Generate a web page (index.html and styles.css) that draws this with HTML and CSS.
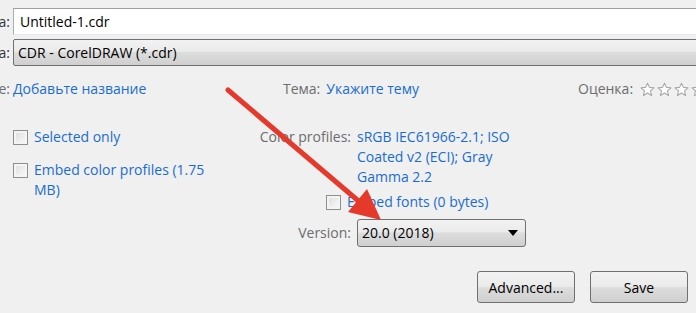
FILE: index.html
```html
<!DOCTYPE html>
<html lang="ru">
<head>
    <meta charset="UTF-8">
    <title>Save Drawing</title>
    <link rel="stylesheet" href="styles.css">
</head>
<body>
    <div class="dialog">
        <div class="fields">
            <label class="field-label">Имя файла:</label>
            <div class="textbox">Untitled-1.cdr</div>
            <label class="field-label">Тип файла:</label>
            <div class="combo">CDR - CorelDRAW (*.cdr)</div>
        </div>

        <div class="meta">
            <div class="meta-item first">
                <span class="meta-label">Название:</span>
                <a class="link">Добавьте название</a>
            </div>
            <div class="meta-item topic">
                <span class="muted">Тема:</span>
                <a class="link">Укажите тему</a>
            </div>
            <div class="meta-item">
                <span class="muted">Оценка:</span>
                <span class="stars">
                    <svg viewBox="0 0 14 14"><path d="M7 1.2 8.8 5 13 5.4 9.8 8.2 10.8 12.6 7 10.3 3.2 12.6 4.2 8.2 1 5.4 5.2 5Z"/></svg>
                    <svg viewBox="0 0 14 14"><path d="M7 1.2 8.8 5 13 5.4 9.8 8.2 10.8 12.6 7 10.3 3.2 12.6 4.2 8.2 1 5.4 5.2 5Z"/></svg>
                    <svg viewBox="0 0 14 14"><path d="M7 1.2 8.8 5 13 5.4 9.8 8.2 10.8 12.6 7 10.3 3.2 12.6 4.2 8.2 1 5.4 5.2 5Z"/></svg>
                    <svg viewBox="0 0 14 14"><path d="M7 1.2 8.8 5 13 5.4 9.8 8.2 10.8 12.6 7 10.3 3.2 12.6 4.2 8.2 1 5.4 5.2 5Z"/></svg>
                </span>
            </div>
        </div>

        <div class="options">
            <div class="options-left">
                <label class="check"><span class="box"></span><span>Selected only</span></label>
                <label class="check"><span class="box"></span><span>Embed color profiles (1.75 MB)</span></label>
            </div>
            <div class="options-right">
                <span class="muted right">Color profiles:</span>
                <span class="value">sRGB IEC61966-2.1; ISO Coated v2 (ECI); Gray Gamma 2.2</span>
                <label class="check fonts"><span class="box"></span><span>Embed fonts (0 bytes)</span></label>
                <span class="muted right version-label">Version:</span>
                <div class="select">20.0 (2018)<span class="caret"></span></div>
            </div>
        </div>

        <div class="actions">
            <button class="btn">Advanced...</button>
            <button class="btn">Save</button>
        </div>
    </div>

    <!-- red callout arrow over the dialog -->
    <svg class="callout" width="696" height="313" viewBox="0 0 696 313">
        <line x1="228" y1="90" x2="362" y2="204" stroke="#e5392c" stroke-width="5" stroke-linecap="round"/>
        <polygon points="381,220 348,212 367,189" fill="#e5392c"/>
    </svg>
</body>
</html>
```

FILE: styles.css
```css
* {
    box-sizing: border-box;
}

body {
    margin: 0;
    width: 696px;
    height: 313px;
    overflow: hidden;
    position: relative;
    background: #f0f0f0;
    font-family: 'Open Sans', 'Liberation Sans', sans-serif;
    font-size: 14px;
    line-height: 20px;
    color: #1e1e1e;
}

/* dialog is cropped on the left, labels start off-screen */
.dialog {
    margin-left: -80px;
    width: 776px;
    padding: 8px 8px 0 0;
}

.fields {
    display: grid;
    grid-template-columns: 90px 1fr;
    column-gap: 3px;
    row-gap: 4px;
    margin-right: -40px;
}

.field-label {
    text-align: right;
    white-space: nowrap;
    align-self: center;
    color: #333;
}

.textbox {
    height: 27px;
    background: #fff;
    border: 1px solid #abadb3;
    border-top-color: #a0a0a0;
    border-bottom-color: #e3e9ef;
    padding: 3px 6px;
    color: #000;
}

.combo {
    height: 27px;
    border: 1px solid #707070;
    border-radius: 2px;
    background: linear-gradient(#f2f2f2 0%, #ebebeb 45%, #dddddd 50%, #cfcfcf 100%);
    padding: 3px 4px;
    color: #000;
}

.meta {
    display: flex;
    margin-top: 13px;
    white-space: nowrap;
}

.meta-item {
    flex: none;
    display: flex;
    gap: 6px;
    align-items: center;
}

.meta-item.first {
    width: 363px;
    gap: 3px;
}

.meta-label {
    width: 90px;
    text-align: right;
    color: #6d6d6d;
}

.meta-item.topic {
    width: 295px;
}

.muted {
    color: #6d6d6d;
}

.link {
    color: #1a6dcc;
}

.stars {
    display: flex;
    gap: 2px;
    margin-left: 1px;
}

.stars svg {
    width: 15px;
    height: 15px;
    fill: #fff;
    stroke: #a8a8a8;
    stroke-width: 1;
    stroke-linejoin: round;
}

.options {
    display: flex;
    margin-top: 28px;
    padding-left: 93px;
}

.options-left {
    width: 210px;
    display: flex;
    flex-direction: column;
    gap: 13px;
}

.check {
    display: flex;
    gap: 6px;
    color: #1a6dcc;
}

.box {
    flex: none;
    width: 15px;
    height: 15px;
    margin-top: 3px;
    border: 1px solid #8e8f8f;
    background: linear-gradient(135deg, #dcdcdc, #fbfbfb);
    box-shadow: inset 0 0 0 2px #f4f4f4;
}

.options-right {
    display: grid;
    grid-template-columns: 128px 169px;
    column-gap: 6px;
    align-items: start;
}

.right {
    text-align: right;
}

.value {
    color: #1a6dcc;
}

.check.fonts {
    grid-column: 1 / 3;
    margin-top: 5px;
    padding-left: 103px;
}

.version-label {
    align-self: center;
    margin-top: 7px;
}

.select {
    margin-top: 7px;
    height: 28px;
    border: 1px solid #707070;
    border-radius: 3px;
    background: linear-gradient(#f2f2f2 0%, #ebebeb 45%, #dddddd 50%, #cfcfcf 100%);
    padding: 3px 4px;
    color: #000;
    display: flex;
    justify-content: space-between;
    align-items: center;
}

.caret {
    width: 0;
    height: 0;
    margin-right: 3px;
    border-left: 5px solid transparent;
    border-right: 5px solid transparent;
    border-top: 6px solid #000;
}

.actions {
    display: flex;
    justify-content: flex-end;
    gap: 15px;
    margin-top: 24px;
}

.btn {
    width: 98px;
    height: 32px;
    border: 1px solid #707070;
    border-radius: 3px;
    background: linear-gradient(#f2f2f2 0%, #ebebeb 48%, #dddddd 52%, #cfcfcf 100%);
    font-family: inherit;
    font-size: 14px;
    color: #000;
    padding: 0;
}

.callout {
    position: absolute;
    top: 0;
    left: 0;
    pointer-events: none;
}
```
